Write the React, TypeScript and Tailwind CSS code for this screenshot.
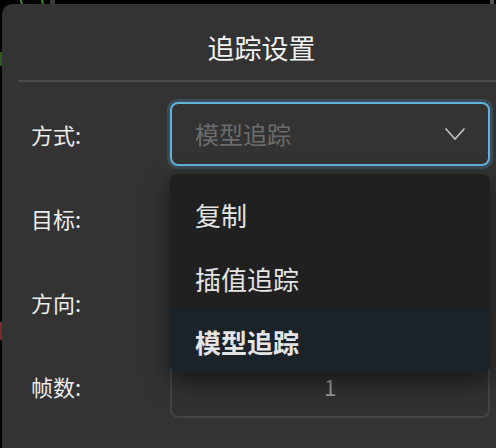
import React from "react";

const font = { fontFamily: '"Noto Sans CJK SC", "Noto Sans", sans-serif' };

function Row({ label, children }: { label: string; children: React.ReactNode }) {
  return (
    <div className="flex items-center h-[64px]">
      <div className="w-[139px] text-[22px] text-[#ededed] leading-none">{label}</div>
      <div className="w-[320px] h-full">{children}</div>
    </div>
  );
}

export default function App() {
  return (
    <div className="relative w-[496px] h-[448px] overflow-hidden bg-black" style={font}>
      <svg className="absolute inset-0" width="496" height="448">
        <line x1="21" y1="0" x2="22" y2="5" stroke="#3f8a2a" strokeWidth="2" />
        <line x1="42" y1="0" x2="43" y2="5" stroke="#3f8a2a" strokeWidth="2" />
        <rect x="50" y="0" width="5" height="4" fill="#3a3a3a" />
        <rect x="490" y="0" width="4" height="4" fill="#555" />
        <rect x="0" y="52" width="2" height="14" fill="#2d5a20" />
        <rect x="0" y="322" width="2" height="18" fill="#7a2a30" />
      </svg>
      <div className="relative ml-[2px] mt-[4px] w-[517px] h-[460px] rounded-[10px] bg-[#333333]">
        <div className="pt-[26px] h-[76px] text-center text-[27px] leading-[36px] text-[#f2f2f2] pl-[2px]">
          追踪设置
        </div>
        <div className="ml-[16px] h-[2px] bg-[#4a4a4a]" />
        <div className="relative pl-[29px] pt-[20px] flex flex-col gap-[20px]">
          <Row label="方式:">
            <div className="h-full rounded-[8px] border-2 border-[#62b4dc] ring-[3px] ring-[#3c4c56] flex items-center justify-between pl-[23px] pr-[22px]">
              <span className="text-[24px] text-[#6c6c6c] leading-none">模型追踪</span>
              <svg width="22" height="14" viewBox="0 0 22 14" fill="none">
                <path d="M1.5 1.5 L11 12 L20.5 1.5" stroke="#bdbdbd" strokeWidth="1.8" />
              </svg>
            </div>
          </Row>
          <Row label="目标:">
            <div className="h-full rounded-[8px] border-2 border-[#444]" />
          </Row>
          <Row label="方向:">
            <div className="h-full rounded-[8px] border-2 border-[#444]" />
          </Row>
          <Row label="帧数:">
            <div className="h-full rounded-[8px] border-2 border-[#444] bg-[#313131] flex items-center justify-center text-[22px] text-[#9a9a9a]">
              1
            </div>
          </Row>
          <div className="absolute left-[168px] top-[92px] w-[320px] rounded-[8px] bg-[#202020] pt-[8px] overflow-hidden shadow-[0_8px_24px_rgba(0,0,0,0.55)]">
            <div className="h-[64px] flex items-center pl-[25px] text-[26px] text-[#e4e4e4]">复制</div>
            <div className="h-[64px] flex items-center pl-[25px] text-[26px] text-[#e4e4e4]">插值追踪</div>
            <div className="h-[63px] flex items-center pl-[25px] text-[26px] font-bold text-[#e4e4e4] bg-[#1b2228]">模型追踪</div>
          </div>
        </div>
      </div>
    </div>
  );
}
